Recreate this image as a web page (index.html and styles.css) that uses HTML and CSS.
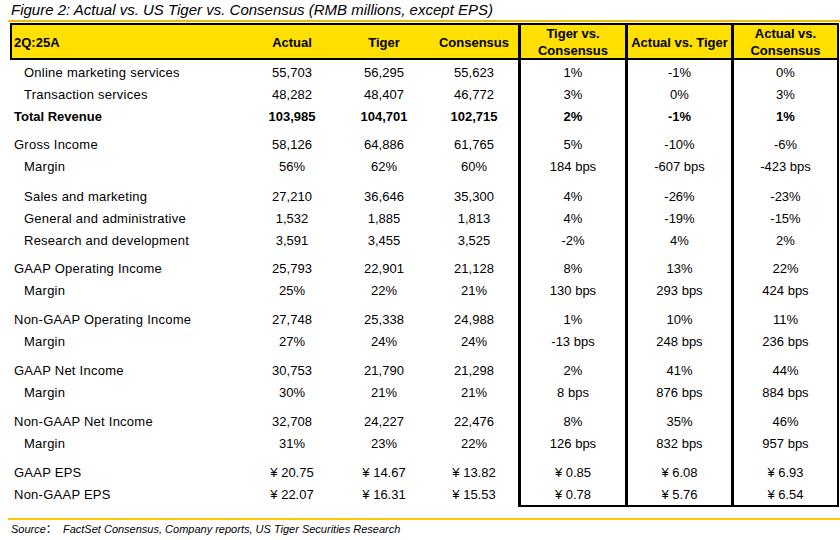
FILE: index.html
```html
<!DOCTYPE html>
<html>
<head>
<meta charset="utf-8">
<link rel="stylesheet" href="styles.css">
</head>
<body>
<div class="page">
  <div class="title">Figure 2: Actual vs. US Tiger vs. Consensus (RMB millions, except EPS)</div>
  <div class="rule rule-top"></div>
  <div class="tbl">
    <div class="row head">
      <div class="lbl">2Q:25A</div>
      <div>Actual</div>
      <div>Tiger</div>
      <div>Consensus</div>
      <div class="v">Tiger vs.<br>Consensus</div>
      <div class="v">Actual vs. Tiger</div>
      <div class="v">Actual vs.<br>Consensus</div>
    </div>
    <div class="row first">
      <div class="lbl sub">Online marketing services</div><div>55,703</div><div>56,295</div><div>55,623</div><div class="v">1%</div><div class="v">-1%</div><div class="v">0%</div>
    </div>
    <div class="row">
      <div class="lbl sub">Transaction services</div><div>48,282</div><div>48,407</div><div>46,772</div><div class="v">3%</div><div class="v">0%</div><div class="v">3%</div>
    </div>
    <div class="row b">
      <div class="lbl">Total Revenue</div><div>103,985</div><div>104,701</div><div>102,715</div><div class="v">2%</div><div class="v">-1%</div><div class="v">1%</div>
    </div>
    <div class="row g6">
      <div class="lbl">Gross Income</div><div>58,126</div><div>64,886</div><div>61,765</div><div class="v">5%</div><div class="v">-10%</div><div class="v">-6%</div>
    </div>
    <div class="row">
      <div class="lbl sub">Margin</div><div>56%</div><div>62%</div><div>60%</div><div class="v">184 bps</div><div class="v">-607 bps</div><div class="v">-423 bps</div>
    </div>
    <div class="row g8">
      <div class="lbl sub">Sales and marketing</div><div>27,210</div><div>36,646</div><div>35,300</div><div class="v">4%</div><div class="v">-26%</div><div class="v">-23%</div>
    </div>
    <div class="row">
      <div class="lbl sub">General and administrative</div><div>1,532</div><div>1,885</div><div>1,813</div><div class="v">4%</div><div class="v">-19%</div><div class="v">-15%</div>
    </div>
    <div class="row">
      <div class="lbl sub">Research and development</div><div>3,591</div><div>3,455</div><div>3,525</div><div class="v">-2%</div><div class="v">4%</div><div class="v">2%</div>
    </div>
    <div class="row g6">
      <div class="lbl">GAAP Operating Income</div><div>25,793</div><div>22,901</div><div>21,128</div><div class="v">8%</div><div class="v">13%</div><div class="v">22%</div>
    </div>
    <div class="row">
      <div class="lbl sub">Margin</div><div>25%</div><div>22%</div><div>21%</div><div class="v">130 bps</div><div class="v">293 bps</div><div class="v">424 bps</div>
    </div>
    <div class="row g7">
      <div class="lbl">Non-GAAP Operating Income</div><div>27,748</div><div>25,338</div><div>24,988</div><div class="v">1%</div><div class="v">10%</div><div class="v">11%</div>
    </div>
    <div class="row">
      <div class="lbl sub">Margin</div><div>27%</div><div>24%</div><div>24%</div><div class="v">-13 bps</div><div class="v">248 bps</div><div class="v">236 bps</div>
    </div>
    <div class="row g7">
      <div class="lbl">GAAP Net Income</div><div>30,753</div><div>21,790</div><div>21,298</div><div class="v">2%</div><div class="v">41%</div><div class="v">44%</div>
    </div>
    <div class="row">
      <div class="lbl sub">Margin</div><div>30%</div><div>21%</div><div>21%</div><div class="v">8 bps</div><div class="v">876 bps</div><div class="v">884 bps</div>
    </div>
    <div class="row g7">
      <div class="lbl">Non-GAAP Net Income</div><div>32,708</div><div>24,227</div><div>22,476</div><div class="v">8%</div><div class="v">35%</div><div class="v">46%</div>
    </div>
    <div class="row">
      <div class="lbl sub">Margin</div><div>31%</div><div>23%</div><div>22%</div><div class="v">126 bps</div><div class="v">832 bps</div><div class="v">957 bps</div>
    </div>
    <div class="row g7">
      <div class="lbl">GAAP EPS</div><div>¥ 20.75</div><div>¥ 14.67</div><div>¥ 13.82</div><div class="v">¥ 0.85</div><div class="v">¥ 6.08</div><div class="v">¥ 6.93</div>
    </div>
    <div class="row last">
      <div class="lbl">Non-GAAP EPS</div><div>¥ 22.07</div><div>¥ 16.31</div><div>¥ 15.53</div><div class="v">¥ 0.78</div><div class="v">¥ 5.76</div><div class="v">¥ 6.54</div>
    </div>
  </div>
  <div class="rule rule-bottom"></div>
  <div class="source">Source<span class="cjk">：</span>&nbsp; FactSet Consensus, Company reports, US Tiger Securities Research</div>
</div>
</body>
</html>
```

FILE: styles.css
```css
* { box-sizing: border-box; }
html, body { margin: 0; padding: 0; background: #fff; }
body {
  font-family: "Liberation Sans", Arial, sans-serif;
  color: #000;
  width: 840px;
  height: 540px;
  overflow: hidden;
}
.page {
  padding-left: 8px;
}
.title {
  height: 20px;
  line-height: 20px;
  padding-left: 3px;
  font-size: 15px;
  font-style: italic;
  white-space: nowrap;
}
.rule {
  height: 0;
  border-top: 2px solid #F4B800;
}
.rule-top { margin-bottom: 1px; }
.rule-bottom { margin-top: 11px; border-top-color: #FFCC00; }
.tbl {
  margin-left: 2px;
  width: 829px;
  font-size: 13px;
}
.row {
  display: grid;
  grid-template-columns: 234px 92px 92px 88px 107px 106px 106px;
  border-left: 2px solid transparent;
  border-right: 2px solid #000;
  line-height: 22px;
}
.row > div {
  text-align: center;
  white-space: nowrap;
}
.row > .lbl {
  text-align: left;
  padding-left: 2px;
  letter-spacing: 0.25px;
}
.b > .lbl, .head > .lbl { letter-spacing: 0; }
.row > .sub { padding-left: 12px; }
.row > .v { border-left: 3px solid #000; }
.head {
  height: 37px;
  border: 2px solid #000;
  background: #FFE000;
  font-weight: bold;
  line-height: 17px;
}
.head > div {
  display: flex;
  align-items: center;
  justify-content: center;
}
.head > .lbl { justify-content: flex-start; }
.first > div { padding-top: 2px; }
.g6 > div { padding-top: 6px; }
.g7 > div { padding-top: 7px; }
.g8 > div { padding-top: 8px; }
.b { font-weight: bold; }
.last { line-height: 21px; }
.last > .v { border-bottom: 2px solid #000; }
.source {
  padding-left: 3px;
  line-height: 16px;
  font-size: 11px;
  font-style: italic;
  white-space: nowrap;
}
.cjk {
  font-family: "Noto Sans CJK SC", sans-serif;
  font-style: normal;
}
```
